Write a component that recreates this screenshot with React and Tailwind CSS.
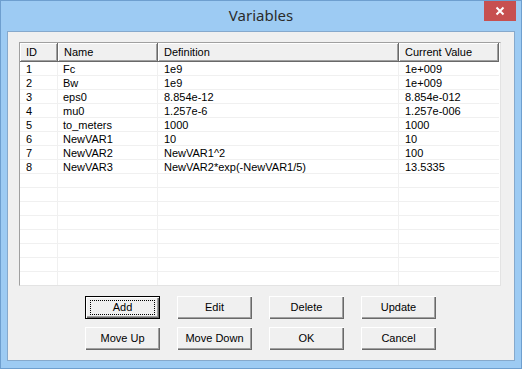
import React from 'react';

const columns = [
    { key: 'id', label: 'ID', width: 'w-[38px]' },
    { key: 'name', label: 'Name', width: 'w-[100px]' },
    { key: 'def', label: 'Definition', width: 'w-[241px]' },
    { key: 'value', label: 'Current Value', width: 'w-[100px]' },
];

const variables = [
    { id: '1', name: 'Fc', def: '1e9', value: '1e+009' },
    { id: '2', name: 'Bw', def: '1e9', value: '1e+009' },
    { id: '3', name: 'eps0', def: '8.854e-12', value: '8.854e-012' },
    { id: '4', name: 'mu0', def: '1.257e-6', value: '1.257e-006' },
    { id: '5', name: 'to_meters', def: '1000', value: '1000' },
    { id: '6', name: 'NewVAR1', def: '10', value: '10' },
    { id: '7', name: 'NewVAR2', def: 'NewVAR1^2', value: '100' },
    { id: '8', name: 'NewVAR3', def: 'NewVAR2*exp(-NewVAR1/5)', value: '13.5335' },
];

// pad out the list with blank rows so the grid lines run to the bottom
const rows = [...variables];
while (rows.length < 17) rows.push({ id: '', name: '', def: '', value: '' });

const buttons = ['Add', 'Edit', 'Delete', 'Update', 'Move Up', 'Move Down', 'OK', 'Cancel'];

const Button = ({ label, isDefault }) => (
    <div
        className={`h-[23px] w-[75px] flex items-center justify-center bg-[#f0f0f0] text-[11px] text-black ${
            isDefault
                ? 'border border-black shadow-[inset_1px_1px_0_#ffffff,inset_-1px_-1px_0_#696969,inset_-2px_-2px_0_#a0a0a0]'
                : 'shadow-[inset_1px_1px_0_#ffffff,inset_-1px_-1px_0_#696969,inset_-2px_-2px_0_#a0a0a0]'
        }`}
    >
        {isDefault ? (
            <div className="w-[65px] h-[15px] border border-dotted border-black flex items-center justify-center">
                {label}
            </div>
        ) : (
            label
        )}
    </div>
);

export default function App() {
    return (
        <div
            className="w-[522px] h-[369px] bg-[#9dcbf3] border border-[#6e9fcf] flex flex-col"
            style={{ fontFamily: '"Liberation Sans", Arial, sans-serif' }}
        >
            {/* Title bar */}
            <div className="relative h-[30px] flex items-center justify-center shrink-0">
                <span
                    className="text-[15px] text-[#2b2b2b] -mt-[1px]"
                    style={{ fontFamily: '"Noto Sans", "Open Sans", sans-serif' }}
                >
                    Variables
                </span>
                <div className="absolute right-[5px] top-0 w-[32px] h-[20px] bg-[#c75050] flex items-center justify-center">
                    <svg width="10" height="10" viewBox="0 0 10 10">
                        <path d="M1.5 1.5 L8.5 8.5 M8.5 1.5 L1.5 8.5" stroke="#ffffff" strokeWidth="2" />
                    </svg>
                </div>
            </div>

            {/* Client area */}
            <div className="mx-[6px] h-[330px] bg-[#f0f0f0] border border-[#86a9cc] pt-[10px] pl-[11px] flex flex-col">
                {/* List view */}
                <div className="w-[482px] h-[244px] bg-white border border-[#a0a0a0] border-r-[#e3e3e3] border-b-[#e3e3e3] overflow-hidden">
                    <div className="flex h-[19px]">
                        {columns.map((col) => (
                            <div
                                key={col.key}
                                className={`${col.width} h-[19px] bg-[#f0f0f0] border-r border-b border-[#696969] shadow-[inset_1px_1px_0_#ffffff,inset_-1px_-1px_0_#a0a0a0] pl-[6px] text-[11px] text-black leading-[18px] whitespace-nowrap`}
                            >
                                {col.label}
                            </div>
                        ))}
                    </div>
                    {rows.map((row, i) => (
                        <div key={i} className="flex h-[14px]">
                            {columns.map((col, j) => (
                                <div
                                    key={col.key}
                                    className={`${col.width} h-[14px] border-b border-[#f0f0f0] ${
                                        j < columns.length - 1 ? 'border-r' : ''
                                    } ${j === 1 ? 'pl-[5px]' : 'pl-[6px]'} text-[11px] text-black leading-[15px] whitespace-nowrap`}
                                >
                                    {row[col.key]}
                                </div>
                            ))}
                        </div>
                    ))}
                </div>

                {/* Buttons */}
                <div className="mt-[10px] ml-[66px] grid grid-cols-[75px_75px_75px_75px] gap-x-[17px] gap-y-[8px]">
                    {buttons.map((label) => (
                        <Button key={label} label={label} isDefault={label === 'Add'} />
                    ))}
                </div>
            </div>
        </div>
    );
}
